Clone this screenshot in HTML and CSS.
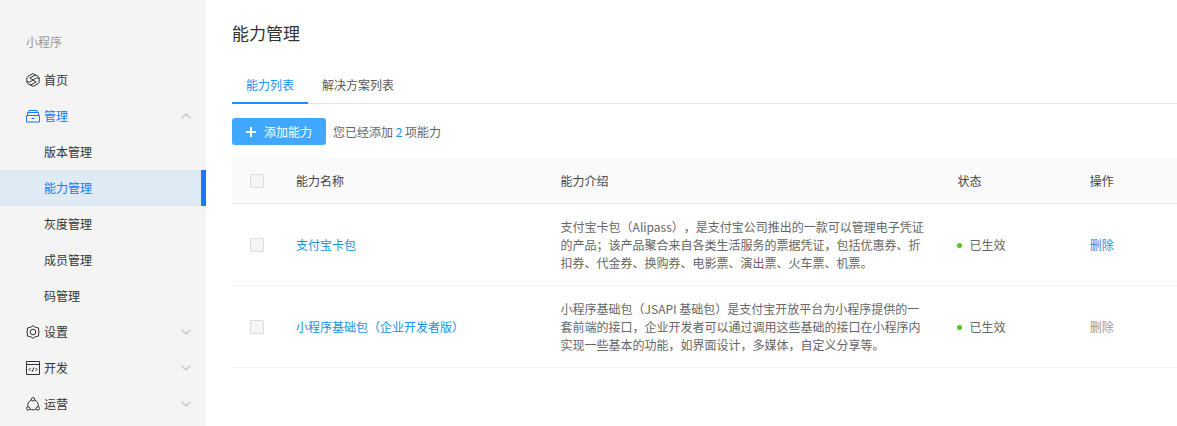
FILE: index.html
```
<!DOCTYPE html>
<html lang="zh-Hans">
<head>
  <meta charset="UTF-8" />
  <title>能力管理</title>
  <link rel="stylesheet" href="styles.css">
</head>
<body>

<nav class="sidebar">
  <div class="sidebar-title">小程序</div>
  <a class="menu-item" href="#">
    <svg class="icon" viewBox="0 0 14 14"><path d="M7 .6 12 3.2 13.2 5v4L12 10.800 7 13.400 2 10.800.8 9V5L2 3.200z"/><path d="M1 8.500 3.500 9.200 7 7 3.800 4.900 9.800 1.900M13 5.500 10.500 4.800 7 7l3.200 2.100-6 3"/></svg>
    <span>首页</span>
  </a>
  <a class="menu-item open" href="#">
    <svg class="icon" viewBox="0 0 14 14"><path d="M3 3.500v-2h8v2M1.500 6.500v-3h11v3M.5 6.500h13v6.500H.5zM5.500 9.500h3"/></svg>
    <span>管理</span>
    <svg class="arrow" viewBox="0 0 10 6"><path d="M.8 5.2 5 1l4.2 4.2"/></svg>
  </a>
  <a class="menu-item sub" href="#">版本管理</a>
  <a class="menu-item sub active" href="#">能力管理</a>
  <a class="menu-item sub" href="#">灰度管理</a>
  <a class="menu-item sub" href="#">成员管理</a>
  <a class="menu-item sub" href="#">码管理</a>
  <a class="menu-item" href="#">
    <svg class="icon" viewBox="0 0 14 14"><path d="M7 .6 9.2 2.2l3.400.8v3l.7 1-.7 1v3l-3.400.8L7 13.400l-2.200-1.600L1.400 11V8L.7 7l.7-1V3l3.400-.8z"/><circle cx="7" cy="7" r="2.8"/></svg>
    <span>设置</span>
    <svg class="arrow" viewBox="0 0 10 6"><path d="M.8.8 5 5 9.2.8"/></svg>
  </a>
  <a class="menu-item" href="#">
    <svg class="icon" viewBox="0 0 14 14"><path d="M.5.5h13v13H.5zM.5 3.500h13M4.500 7 3 8.500 4.500 10M9.500 7 11 8.500 9.500 10M7.800 6.500 6.200 10.800"/></svg>
    <span>开发</span>
    <svg class="arrow" viewBox="0 0 10 6"><path d="M.8.8 5 5 9.2.8"/></svg>
  </a>
  <a class="menu-item" href="#">
    <svg class="icon" viewBox="0 0 14 14"><circle cx="7" cy="2.3" r="1.7"/><circle cx="2.2" cy="11.4" r="1.7"/><circle cx="11.8" cy="11.4" r="1.7"/><path d="M5.300 2.900C2.800 4 1.400 6.500 1.700 9.700M8.700 2.900c2.500 1.100 3.900 3.600 3.600 6.800M3.900 12.100c2 1 4.200 1 6.200 0"/></svg>
    <span>运营</span>
    <svg class="arrow" viewBox="0 0 10 6"><path d="M.8.8 5 5 9.2.8"/></svg>
  </a>
</nav>

<main class="content">
  <h1 class="page-title">能力管理</h1>

  <div class="tabs">
    <a class="tab active" href="#">能力列表</a>
    <a class="tab" href="#">解决方案列表</a>
  </div>

  <div class="toolbar">
    <button class="add-btn" type="button">
      <svg class="plus" viewBox="0 0 10 10"><path d="M5 0v10M0 5h10"/></svg>
      添加能力
    </button>
    <span>您已经添加 <b class="count">2</b> 项能力</span>
  </div>

  <table class="list">
    <colgroup>
      <col class="col-check">
      <col class="col-name">
      <col class="col-desc">
      <col class="col-status">
      <col>
    </colgroup>
    <thead>
      <tr>
        <th class="check"><input type="checkbox" aria-label="全选" disabled></th>
        <th>能力名称</th>
        <th>能力介绍</th>
        <th>状态</th>
        <th>操作</th>
      </tr>
    </thead>
    <tbody>
      <tr>
        <td class="check"><input type="checkbox" aria-label="支付宝卡包" disabled></td>
        <td><a class="link" href="#">支付宝卡包</a></td>
        <td>支付宝卡包（Alipass），是支付宝公司推出的一款可以管理电子凭证的产品；该产品聚合来自各类生活服务的票据凭证，包括优惠券、折扣券、代金券、换购券、电影票、演出票、火车票、机票。</td>
        <td><span class="status">已生效</span></td>
        <td><button class="del-btn" type="button">删除</button></td>
      </tr>
      <tr>
        <td class="check"><input type="checkbox" aria-label="小程序基础包" disabled></td>
        <td><a class="link" href="#">小程序基础包（企业开发者版）</a></td>
        <td>小程序基础包（JSAPI 基础包）是支付宝开放平台为小程序提供的一套前端的接口，企业开发者可以通过调用这些基础的接口在小程序内实现一些基本的功能，如界面设计，多媒体，自定义分享等。</td>
        <td><span class="status">已生效</span></td>
        <td><button class="del-btn" type="button" disabled>删除</button></td>
      </tr>
    </tbody>
  </table>
</main>

</body>
</html>
```
FILE: styles.css
```
* {
  box-sizing: border-box;
}

body {
  margin: 0;
  display: flex;
  min-height: 100vh;
  background: #fff;
  color: #666;
  font-family: "Noto Sans CJK SC", sans-serif;
  font-size: 12px;
  line-height: 18px;
  text-spacing-trim: space-all;
}

a {
  text-decoration: none;
}

button {
  border: none;
  font: inherit;
  cursor: pointer;
}

svg {
  fill: none;
  stroke: currentColor;
}

/* 左侧菜单 */
.sidebar {
  flex: none;
  width: 206px;
  padding-top: 24px;
  background: #f4f4f4;
}

.sidebar-title {
  margin-bottom: 2px;
  padding-left: 26px;
  line-height: 36px;
  color: #999;
}

.menu-item {
  display: flex;
  align-items: center;
  gap: 4px;
  height: 36px;
  padding: 0 15px 0 26px;
  color: #333;
}

.menu-item.open,
.menu-item.active {
  color: #1677ff;
}

.menu-item.sub {
  padding-left: 44px;
}

.menu-item.active {
  background: #deebf5;
  border-right: 5px solid #1677ff;
}

.icon {
  width: 14px;
  height: 14px;
}

.arrow {
  width: 10px;
  height: 6px;
  margin-left: auto;
  color: #c4c6cf;
  stroke-width: 1.4;
}

/* 右侧内容 */
.content {
  flex: 1;
  min-width: 0;
  padding: 20px 0 20px 26px;
}

.page-title {
  margin: 0;
  font-size: 17px;
  font-weight: 400;
  line-height: 26px;
  color: #333;
}

.tabs {
  display: flex;
  margin-top: 22px;
  border-bottom: 1px solid #e8e8e8;
}

.tab {
  margin-bottom: -1px;
  padding: 8px 14px;
  border-bottom: 2px solid transparent;
  color: #595959;
}

.tab.active {
  border-color: #1890ff;
  color: #1890ff;
}

.toolbar {
  display: flex;
  align-items: center;
  gap: 7px;
  margin: 14px 0 13px;
}

.add-btn {
  display: flex;
  align-items: center;
  gap: 8px;
  height: 27px;
  padding: 0 14px;
  border-radius: 3px;
  background: #40a9ff;
  color: #fff;
}

.plus {
  width: 10px;
  height: 10px;
  stroke-width: 2;
}

.count {
  font-weight: 400;
  color: #1890e8;
}

.list {
  width: 100%;
  table-layout: fixed;
  border-collapse: separate;
  border-spacing: 0;
}

.col-check {
  width: 48px;
}

.col-name {
  width: 28%;
}

.col-desc {
  width: 42%;
}

.col-status {
  width: 14%;
}

.list th {
  padding: 14px 12px 13px 16px;
  background: #fafafa;
  border-bottom: 1px solid #e8e8e8;
  font-weight: 400;
  text-align: left;
  color: #444;
}

.list td {
  padding: 14px 12px 13px 16px;
  border-bottom: 1px solid #f4f4f4;
}

.list .check {
  padding-left: 18px;
}

.check input {
  appearance: none;
  display: block;
  width: 14px;
  height: 14px;
  margin: 0;
  border: 1px solid #dcdcdc;
  border-radius: 2px;
  background: #f5f5f5;
}

.link {
  color: #1890e8;
}

.status {
  display: flex;
  align-items: center;
  gap: 7px;
}

.status::before {
  content: "";
  width: 5px;
  height: 5px;
  border-radius: 50%;
  background: #52c41a;
}

.del-btn {
  padding: 0;
  background: none;
  color: #1890e8;
}

.del-btn:disabled {
  color: #999;
  cursor: default;
}
```
